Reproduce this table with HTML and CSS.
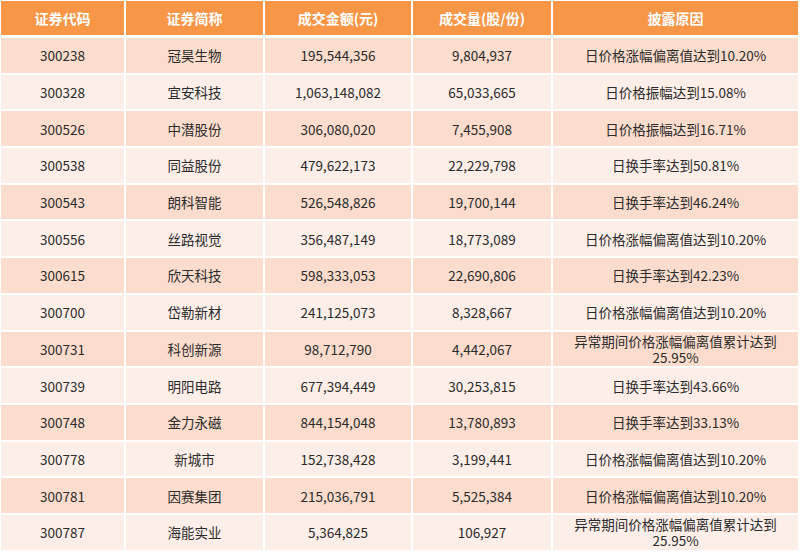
FILE: index.html
```html
<!DOCTYPE html>
<html lang="zh-CN">
<head>
<meta charset="utf-8">
<link rel="stylesheet" href="styles.css">
</head>
<body>
<table class="tbl">
  <colgroup>
    <col class="c1"><col class="c2"><col class="c3"><col class="c4"><col class="c5">
  </colgroup>
  <thead>
    <tr><th>证券代码</th><th>证券简称</th><th>成交金额(元)</th><th>成交量(股/份)</th><th>披露原因</th></tr>
  </thead>
  <tbody>
    <tr><td>300238</td><td>冠昊生物</td><td>195,544,356</td><td>9,804,937</td><td>日价格涨幅偏离值达到10.20%</td></tr>
    <tr><td>300328</td><td>宜安科技</td><td>1,063,148,082</td><td>65,033,665</td><td>日价格振幅达到15.08%</td></tr>
    <tr><td>300526</td><td>中潜股份</td><td>306,080,020</td><td>7,455,908</td><td>日价格振幅达到16.71%</td></tr>
    <tr><td>300538</td><td>同益股份</td><td>479,622,173</td><td>22,229,798</td><td>日换手率达到50.81%</td></tr>
    <tr><td>300543</td><td>朗科智能</td><td>526,548,826</td><td>19,700,144</td><td>日换手率达到46.24%</td></tr>
    <tr><td>300556</td><td>丝路视觉</td><td>356,487,149</td><td>18,773,089</td><td>日价格涨幅偏离值达到10.20%</td></tr>
    <tr><td>300615</td><td>欣天科技</td><td>598,333,053</td><td>22,690,806</td><td>日换手率达到42.23%</td></tr>
    <tr><td>300700</td><td>岱勒新材</td><td>241,125,073</td><td>8,328,667</td><td>日价格涨幅偏离值达到10.20%</td></tr>
    <tr><td>300731</td><td>科创新源</td><td>98,712,790</td><td>4,442,067</td><td>异常期间价格涨幅偏离值累计达到25.95%</td></tr>
    <tr><td>300739</td><td>明阳电路</td><td>677,394,449</td><td>30,253,815</td><td>日换手率达到43.66%</td></tr>
    <tr><td>300748</td><td>金力永磁</td><td>844,154,048</td><td>13,780,893</td><td>日换手率达到33.13%</td></tr>
    <tr><td>300778</td><td>新城市</td><td>152,738,428</td><td>3,199,441</td><td>日价格涨幅偏离值达到10.20%</td></tr>
    <tr><td>300781</td><td>因赛集团</td><td>215,036,791</td><td>5,525,384</td><td>日价格涨幅偏离值达到10.20%</td></tr>
    <tr><td>300787</td><td>海能实业</td><td>5,364,825</td><td>106,927</td><td>异常期间价格涨幅偏离值累计达到25.95%</td></tr>
  </tbody>
</table>
</body>
</html>
```

FILE: styles.css
```css
html, body {
  margin: 0;
  padding: 0;
  background: #ffffff;
}
body {
  font-family: "Noto Sans CJK SC", "Noto Sans", sans-serif;
  color: #2b2b2b;
}
.tbl {
  table-layout: fixed;
  width: 801px;
  border-collapse: separate;
  border-spacing: 2px;
  margin: -1px 0 0 -1px;
}
.c1 { width: 123px; }
.c2 { width: 137px; }
.c3 { width: 146px; }
.c4 { width: 138px; }
.c5 { width: 245px; }
.tbl th {
  background: #f79646;
  color: #ffffff;
  font-weight: bold;
  font-size: 14px;
  height: 34px;
  padding: 0;
  text-align: center;
  vertical-align: middle;
  border-bottom: 1px solid #ffffff;
  box-sizing: content-box;
}
.tbl td {
  height: 34.7px;
  padding: 0 8px;
  font-size: 13.5px;
  line-height: 16px;
  text-align: center;
  vertical-align: middle;
  box-sizing: border-box;
}
.tbl tbody tr:nth-child(odd) td { background: #fcdccd; }
.tbl tbody tr:nth-child(even) td { background: #fdeee8; }
```
